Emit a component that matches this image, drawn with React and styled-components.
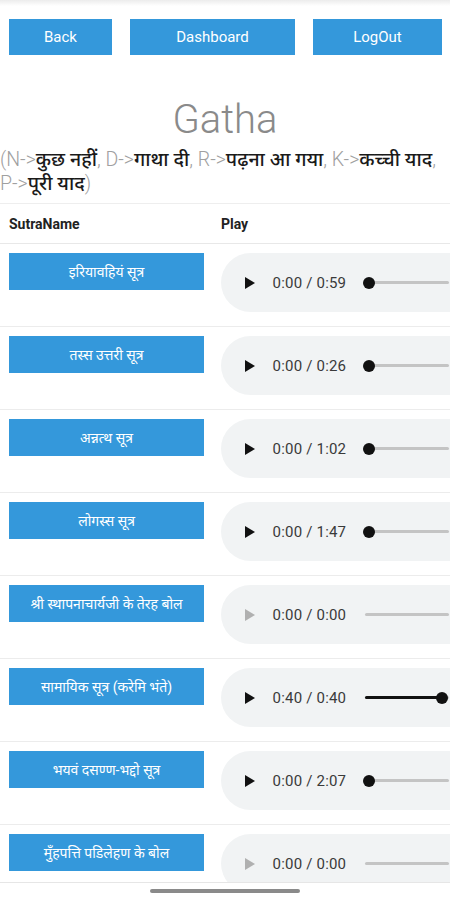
import React from "react";
import styled, { createGlobalStyle } from "styled-components";

const sutras = [
  { name: "इरियावहियं सूत्र", time: "0:00 / 0:59", progress: 0 },
  { name: "तस्स उत्तरी सूत्र", time: "0:00 / 0:26", progress: 0 },
  { name: "अन्नत्थ सूत्र", time: "0:00 / 1:02", progress: 0 },
  { name: "लोगस्स सूत्र", time: "0:00 / 1:47", progress: 0 },
  { name: "श्री स्थापनाचार्यजी के तेरह बोल", time: "0:00 / 0:00", disabled: true },
  { name: "सामायिक सूत्र (करेमि भंते)", time: "0:40 / 0:40", progress: 100 },
  { name: "भयवं दसण्ण-भद्दो सूत्र", time: "0:00 / 2:07", progress: 0 },
  { name: "मुँहपत्ति पडिलेहण के बोल", time: "0:00 / 0:00", disabled: true },
];

const legend = [
  ["N", "कुछ नहीं"],
  ["D", "गाथा दी"],
  ["R", "पढ़ना आ गया"],
  ["K", "कच्ची याद"],
  ["P", "पूरी याद"],
];

const App = () => {
  return (
    <>
      <GlobalStyle />
      <Screen>
        <Page>
          <TopShade />
          <Nav>
            <NavButton width={103}>Back</NavButton>
            <NavButton width={165}>Dashboard</NavButton>
            <NavButton width={129}>LogOut</NavButton>
          </Nav>
          <Title>Gatha</Title>
          <Legend>
            {legend.map(([k, v], i) => (
              <React.Fragment key={k}>
                <Item>
                  {i === 0 ? "(" : ""}
                  {k}-&gt;<Hindi>{v}</Hindi>
                  {i < legend.length - 1 ? "," : ")"}
                </Item>{" "}
              </React.Fragment>
            ))}
          </Legend>
          <Table>
            <HeadRow>
              <NameHead>SutraName</NameHead>
              <HeadCell>Play</HeadCell>
            </HeadRow>
            {sutras.map((s) => (
              <Row key={s.name}>
                <NameCell>
                  <SutraButton>{s.name}</SutraButton>
                </NameCell>
                <Player>
                  <PlayIcon viewBox="0 0 12 14" disabled={s.disabled}>
                    <path d="M1 1 L11 7 L1 13 Z" />
                  </PlayIcon>
                  <Time>{s.time}</Time>
                  <Track>
                    <Fill style={{ width: `${s.progress || 0}%` }} />
                    {!s.disabled && (
                      <Thumb style={{ left: `${4 + ((s.progress || 0) / 100) * 73}px` }} />
                    )}
                  </Track>
                </Player>
              </Row>
            ))}
          </Table>
        </Page>
        <NavBar>
          <Handle />
        </NavBar>
      </Screen>
    </>
  );
};

const GlobalStyle = createGlobalStyle`
  html, body {
    margin: 0;
    padding: 0;
    background: #ffffff;
    overflow: hidden;
  }
  body {
    font-family: Roboto, "Noto Sans", "Noto Sans Devanagari", sans-serif;
  }
`;

const Screen = styled.div`
  width: 450px;
  height: 900px;
  display: flex;
  flex-direction: column;
  overflow: hidden;
`;

const Page = styled.div`
  height: 883px;
  overflow: hidden;
  border-bottom: 1px solid #e6e6e6;
  box-sizing: border-box;
`;

const TopShade = styled.div`
  height: 6px;
  background: linear-gradient(#ececec, #ffffff);
`;

const Nav = styled.div`
  display: flex;
  gap: 18px;
  padding: 13px 0 0 9px;
`;

const NavButton = styled.div`
  width: ${(p) => p.width}px;
  height: 36px;
  background: #3498db;
  color: #ffffff;
  font-size: 15px;
  display: flex;
  align-items: center;
  justify-content: center;
`;

const Title = styled.h1`
  margin: 41px 0 0;
  text-align: center;
  font-weight: 300;
  font-size: 40px;
  line-height: 48px;
  color: #8a8a8a;
`;

const Legend = styled.p`
  margin: 4px 0 0;
  font-size: 19.5px;
  line-height: 24px;
  font-weight: 300;
  color: #a0a0a0;
`;

const Item = styled.span`
  white-space: nowrap;
`;

const Hindi = styled.span`
  color: #1a1a1a;
  font-weight: 500;
`;

const Table = styled.div`
  margin-top: 7px;
  border-top: 1px solid #eeeeee;
  width: 520px;
`;

const HeadRow = styled.div`
  display: flex;
  height: 39px;
  align-items: center;
  border-bottom: 1px solid #e8e8e8;
`;

const HeadCell = styled.div`
  font-size: 14px;
  font-weight: 700;
  color: #222222;
`;

const NameHead = styled(HeadCell)`
  width: 221px;
  padding-left: 9px;
  box-sizing: border-box;
`;

const Row = styled.div`
  display: flex;
  align-items: flex-start;
  padding: 9px 0 14px;
  border-bottom: 1px solid #ececec;
`;

const NameCell = styled.div`
  width: 221px;
  padding-left: 9px;
  box-sizing: border-box;
`;

const SutraButton = styled.div`
  width: 195px;
  height: 37px;
  background: #3498db;
  color: #ffffff;
  font-size: 14px;
  display: flex;
  align-items: center;
  justify-content: center;
  white-space: nowrap;
`;

const Player = styled.div`
  width: 300px;
  height: 59px;
  background: #f1f3f4;
  border-radius: 30px;
  display: flex;
  align-items: center;
  padding-left: 23px;
  box-sizing: border-box;
`;

const PlayIcon = styled.svg`
  width: 12px;
  height: 14px;
  fill: ${(p) => (p.disabled ? "#b0b0b0" : "#111111")};
`;

const Time = styled.span`
  margin-left: 17px;
  font-size: 15px;
  letter-spacing: 0.2px;
  color: #3a3a3a;
  white-space: nowrap;
`;

const Track = styled.div`
  position: relative;
  margin-left: 19px;
  width: 84px;
  height: 3px;
  background: #c4c4c4;
  border-radius: 2px;
`;

const Fill = styled.div`
  height: 100%;
  max-width: 77px;
  background: #111111;
  border-radius: 2px;
`;

const Thumb = styled.div`
  position: absolute;
  top: 50%;
  width: 12px;
  height: 12px;
  margin: -6px 0 0 -6px;
  border-radius: 50%;
  background: #111111;
`;

const NavBar = styled.div`
  flex: 1;
  display: flex;
  justify-content: center;
  padding-top: 6px;
`;

const Handle = styled.div`
  width: 150px;
  height: 4px;
  border-radius: 2px;
  background: #8a8a8a;
`;

export default App;
